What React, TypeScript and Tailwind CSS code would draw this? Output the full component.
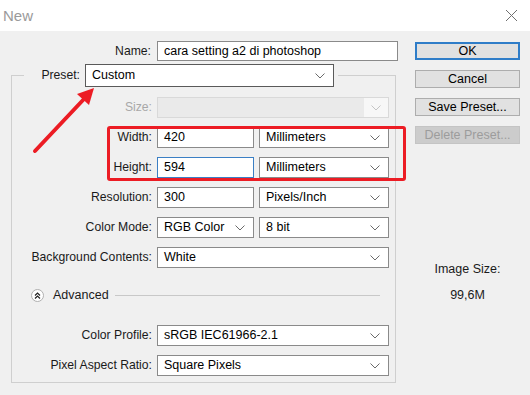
import React from "react";

const FONT = { fontFamily: '"Liberation Sans", Arial, sans-serif' };

function Chevron({ muted }: { muted?: boolean }) {
  return (
    <svg width="10" height="6" viewBox="0 0 10 6" className="shrink-0">
      <polyline
        points="0.5,0.5 5,5 9.5,0.5"
        fill="none"
        stroke={muted ? "#c4c4c4" : "#6a6a6a"}
        strokeWidth="1"
      />
    </svg>
  );
}

function Select({
  value,
  className,
  focused,
}: {
  value: string;
  className: string;
  focused?: boolean;
}) {
  return (
    <div
      className={
        "flex items-center justify-between border bg-white pl-[6px] pr-[8px] text-[12.5px] text-black " +
        (focused ? "border-[#5a5a5a] " : "border-[#8a8a8a] ") +
        className
      }
    >
      <span className="leading-none">{value}</span>
      <Chevron />
    </div>
  );
}

function Input({
  value,
  className,
  focused,
}: {
  value: string;
  className: string;
  focused?: boolean;
}) {
  return (
    <div
      className={
        "flex items-center border bg-white pl-[6px] text-[12.5px] text-black " +
        (focused ? "border-[#3b7fc4] " : "border-[#8a8a8a] ") +
        className
      }
    >
      <span className="leading-none">{value}</span>
    </div>
  );
}

function Row({ label, children, muted }: { label: string; children: React.ReactNode; muted?: boolean }) {
  return (
    <div className="flex h-[21px] items-center">
      <span
        className={
          "w-[140px] shrink-0 text-right text-[12.2px] " +
          (muted ? "text-[#a8a8a8]" : "text-[#1a1a1a]")
        }
      >
        {label}
      </span>
      <div className="ml-[5px] flex h-full gap-[5px]">{children}</div>
    </div>
  );
}

function Button({
  label,
  primary,
  disabled,
}: {
  label: string;
  primary?: boolean;
  disabled?: boolean;
}) {
  return (
    <div
      className={
        "flex h-[18px] w-[105px] items-center justify-center text-[12.5px] " +
        (primary
          ? "border-2 border-[#2f7dc8] bg-[#e1e1e1] text-black"
          : disabled
            ? "border border-[#c4c4c4] bg-[#cccccc] text-[#9c9c9c]"
            : "border border-[#adadad] bg-[#e1e1e1] text-black")
      }
    >
      {label}
    </div>
  );
}

export default function App() {
  return (
    <div
      className="relative h-[395px] w-[530px] overflow-hidden bg-[#f0f0f0]"
      style={FONT}
    >
      {/* Title bar */}
      <div className="flex h-[31px] items-center justify-between bg-white pl-[3px] pr-[12px]">
        <span className="mt-[1px] text-[15px] text-[#9a9a9a]">New</span>
        <svg width="13" height="13" viewBox="0 0 13 13">
          <line x1="1" y1="1" x2="12" y2="12" stroke="#707070" strokeWidth="1" />
          <line x1="12" y1="1" x2="1" y2="12" stroke="#707070" strokeWidth="1" />
        </svg>
      </div>

      <div className="flex">
        {/* Left form column */}
        <div className="flex w-[415px] flex-col pt-[10px]">
          <div className="flex h-[20px] items-center">
            <span className="w-[151px] text-right text-[12.2px] text-[#1a1a1a]">Name:</span>
            <Input value="cara setting a2 di photoshop" className="ml-[6px] h-[20px] w-[241px]" />
          </div>

          <fieldset className="ml-[11px] mt-[3px] w-[385px] border border-[#cfcfcf] pb-[6px] pl-0 pr-[5px]">
            <legend className="ml-[12px] p-0">
              <div className="flex items-center pr-[4px]">
                <span className="w-[56px] text-right text-[12.2px] text-[#1a1a1a]">Preset:</span>
                <Select value="Custom" focused className="ml-[5px] h-[23px] w-[249px]" />
              </div>
            </legend>

            <div className="flex flex-col gap-[9px] pt-[10px]">
              <Row label="Size:" muted>
                <div className="flex h-full w-[232px] items-center justify-end border border-[#d9d9d9] bg-[#eaeaea]">
                  <div className="flex h-full w-[24px] items-center justify-center bg-[#f7f7f7]">
                    <Chevron muted />
                  </div>
                </div>
              </Row>
              <Row label="Width:">
                <Input value="420" className="h-full w-[97px]" />
                <Select value="Millimeters" className="h-full w-[130px]" />
              </Row>
              <Row label="Height:">
                <Input value="594" focused className="h-full w-[97px]" />
                <Select value="Millimeters" className="h-full w-[130px]" />
              </Row>
              <Row label="Resolution:">
                <Input value="300" className="h-full w-[97px]" />
                <Select value="Pixels/Inch" className="h-full w-[130px]" />
              </Row>
              <Row label="Color Mode:">
                <Select value="RGB Color" className="h-full w-[97px]" />
                <Select value="8 bit" className="h-full w-[130px]" />
              </Row>
              <Row label="Background Contents:">
                <Select value="White" className="h-full w-[232px]" />
              </Row>

              {/* Advanced */}
              <div className="mt-[10px] flex h-[16px] items-center">
                <div className="ml-[19px] flex h-[13px] w-[13px] items-center justify-center rounded-full border border-[#b0b0b0] bg-white">
                  <svg width="7" height="7" viewBox="0 0 7 7">
                    <polyline points="1,3.5 3.5,1 6,3.5" fill="none" stroke="#222" strokeWidth="1.2" />
                    <polyline points="1,6.5 3.5,4 6,6.5" fill="none" stroke="#222" strokeWidth="1.2" />
                  </svg>
                </div>
                <span className="ml-[9px] text-[12.5px] text-[#1a1a1a]">Advanced</span>
                <div className="ml-[6px] mr-[10px] h-px flex-1 bg-[#c8c8c8]" />
              </div>

              <div className="mt-[13px]">
                <Row label="Color Profile:">
                  <Select value="sRGB IEC61966-2.1" className="h-full w-[232px]" />
                </Row>
              </div>
              <Row label="Pixel Aspect Ratio:">
                <Select value="Square Pixels" className="h-full w-[232px]" />
              </Row>
            </div>
          </fieldset>
        </div>

        {/* Right column */}
        <div className="flex w-[105px] flex-col items-center pt-[11px]">
          <div className="flex flex-col gap-[10px]">
            <Button label="OK" primary />
            <Button label="Cancel" />
            <Button label="Save Preset..." />
            <Button label="Delete Preset..." disabled />
          </div>
          <span className="mt-[116px] text-[12.5px] text-[#1a1a1a]">Image Size:</span>
          <span className="mt-[7px] text-[12.5px] text-[#1a1a1a]">99,6M</span>
        </div>
      </div>

      {/* Red highlight box */}
      <div className="absolute left-[107px] top-[126px] h-[55px] w-[299px] rounded-[3px] border-[3px] border-[#ec1c24]" />

      {/* Red arrow */}
      <svg className="absolute left-0 top-0" width="530" height="395" viewBox="0 0 530 395">
        <line x1="35" y1="151" x2="84" y2="99" stroke="#ec1c24" strokeWidth="4" strokeLinecap="round" />
        <polygon points="94,88 89,105 77,94" fill="#ec1c24" />
      </svg>
    </div>
  );
}
